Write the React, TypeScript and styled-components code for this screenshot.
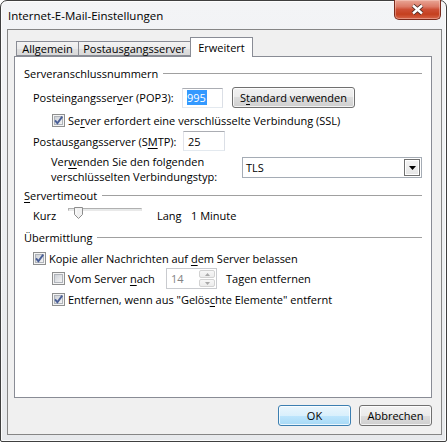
import React from 'react';
import styled, { createGlobalStyle } from 'styled-components';

const FONT = `'Segoe UI', 'Open Sans', 'Liberation Sans', sans-serif`;

const GlobalStyle = createGlobalStyle`
  html, body { margin: 0; padding: 0; background: #ffffff; }
  body { font-family: ${FONT}; }
`;

const Window = styled.div`
  box-sizing: border-box;
  width: 447px;
  height: 442px;
  border: 1px solid #3f3f3f;
  border-radius: 7px 7px 2px 2px;
  background: linear-gradient(180deg, #f3f4f6 0%, #eceef0 60%, #e7e9ec 100%);
  box-shadow: inset 0 0 0 1px rgba(255, 255, 255, 0.8);
  padding: 0 4px 6px 6px;
  display: flex;
  flex-direction: column;
  font-family: ${FONT};
  font-size: 11px;
  color: #000;
`;

const TitleBar = styled.div`
  height: 28px;
  display: flex;
  align-items: flex-start;
  justify-content: space-between;
`;

const Title = styled.div`
  margin: 7px 0 0 1px;
  line-height: 16px;
  font-size: 11.5px;
`;

const CloseButton = styled.div`
  box-sizing: border-box;
  width: 47px;
  height: 20px;
  margin: -1px 1px 0 0;
  border: 1px solid #7a2a1c;
  border-top: none;
  border-radius: 0 0 5px 5px;
  background: linear-gradient(
    180deg,
    #e9a797 0%,
    #dc7a66 35%,
    #cd4f35 50%,
    #c5401f 75%,
    #d6654a 100%
  );
  box-shadow: inset 0 0 0 1px rgba(255, 220, 210, 0.4);
  display: flex;
  align-items: center;
  justify-content: center;
`;

const Client = styled.div`
  box-sizing: border-box;
  height: 406px;
  border: 1px solid #858585;
  background: #f0f0f0;
  padding: 7px 9px 8px 6px;
  display: flex;
  flex-direction: column;
`;

const TabStrip = styled.div`
  height: 19px;
  display: flex;
  align-items: flex-end;
  padding-left: 3px;
  position: relative;
  z-index: 1;
`;

const Tab = styled.div<{ $active?: boolean; $w: number }>`
  box-sizing: border-box;
  width: ${(p) => p.$w}px;
  height: ${(p) => (p.$active ? 20 : 15)}px;
  margin-left: -1px;
  margin-bottom: ${(p) => (p.$active ? -1 : 0)}px;
  border: 1px solid #898c95;
  border-bottom: ${(p) => (p.$active ? 'none' : '1px solid #898c95')};
  background: ${(p) =>
    p.$active
      ? '#ffffff'
      : 'linear-gradient(180deg, #f3f3f3 0%, #ebebeb 50%, #e0e0e0 50%, #d9d9d9 100%)'};
  line-height: 13px;
  padding-top: ${(p) => (p.$active ? 3 : 0)}px;
  text-align: center;
  white-space: nowrap;
`;

const Panel = styled.div`
  box-sizing: border-box;
  height: 342px;
  border: 1px solid #898c95;
  background: #ffffff;
  padding: 0 9px;
  display: flex;
  flex-direction: column;
`;

const GroupHeader = styled.div<{ $mt: number }>`
  height: 16px;
  margin-top: ${(p) => p.$mt}px;
  display: flex;
  align-items: center;
  white-space: nowrap;
  &::after {
    content: '';
    flex: 1;
    margin-left: 5px;
    margin-top: 1px;
    border-top: 1px solid #a0a0a0;
  }
`;

const Row = styled.div<{ $mt: number; $h: number; $indent: number }>`
  height: ${(p) => p.$h}px;
  margin-top: ${(p) => p.$mt}px;
  padding-left: ${(p) => p.$indent}px;
  display: flex;
  align-items: center;
  white-space: nowrap;
`;

const Label = styled.span<{ $w?: number }>`
  flex: none;
  width: ${(p) => (p.$w ? `${p.$w}px` : 'auto')};
`;

const TwoLineLabel = styled.span<{ $w: number }>`
  flex: none;
  width: ${(p) => p.$w}px;
  display: flex;
  flex-direction: column;
  line-height: 15px;
`;

const LabelLine = styled.span`
  display: block;
  height: 15px;
`;

const U = styled.span`
  text-decoration: underline;
  text-underline-offset: 2px;
`;

const TextBox = styled.div<{ $w: number; $h: number }>`
  box-sizing: border-box;
  flex: none;
  width: ${(p) => p.$w}px;
  height: ${(p) => p.$h}px;
  border: 1px solid;
  border-color: #abadb3 #dbdfe6 #e3e9ef #e2e3ea;
  background: #ffffff;
  padding-left: 4px;
  display: flex;
  align-items: center;
`;

const Selected = styled.span`
  background: #3399ff;
  color: #ffffff;
  line-height: 15px;
  padding: 0 1px 0 0;
`;

const PushButton = styled.div<{ $w: number; $default?: boolean; $ml?: number }>`
  box-sizing: border-box;
  flex: none;
  width: ${(p) => p.$w}px;
  height: 21px;
  margin-left: ${(p) => p.$ml ?? 0}px;
  border: 1px solid ${(p) => (p.$default ? '#3c7fb1' : '#707070')};
  border-radius: 3px;
  background: ${(p) =>
    p.$default
      ? 'linear-gradient(180deg, #eaf6fd 0%, #d9f0fc 50%, #bee6fd 50%, #a7d9f5 100%)'
      : 'linear-gradient(180deg, #f2f2f2 0%, #ebebeb 50%, #dddddd 50%, #cfcfcf 100%)'};
  box-shadow: inset 0 0 0 1px rgba(255, 255, 255, 0.75);
  display: flex;
  align-items: center;
  justify-content: center;
`;

const CheckBoxBox = styled.span`
  flex: none;
  width: 13px;
  height: 13px;
  margin-right: 3px;
  display: inline-flex;
`;

const CheckBox = ({ checked }: { checked?: boolean }) => (
  <CheckBoxBox>
    <svg width="13" height="13" viewBox="0 0 13 13">
      <defs>
        <linearGradient id="cbfill" x1="0" y1="0" x2="1" y2="1">
          <stop offset="0" stopColor="#cbcfd5" />
          <stop offset="1" stopColor="#f6f6f6" />
        </linearGradient>
      </defs>
      <rect x="0.5" y="0.5" width="12" height="12" fill="#f4f4f4" stroke="#8e8f8f" />
      <rect x="2.5" y="2.5" width="8" height="8" fill="url(#cbfill)" stroke="#b0b4ba" />
      {checked && (
        <path
          d="M3 6.3 L5.4 9.2 L10.2 2.6"
          fill="none"
          stroke="#4a5f97"
          strokeWidth="1.9"
          strokeLinejoin="miter"
        />
      )}
    </svg>
  </CheckBoxBox>
);

const Combo = styled.div<{ $w: number }>`
  box-sizing: border-box;
  flex: none;
  width: ${(p) => p.$w}px;
  height: 21px;
  margin-top: -3px;
  border: 1px solid #a5acb5;
  background: #ffffff;
  padding: 0 1px 0 3px;
  display: flex;
  align-items: center;
  justify-content: space-between;
`;

const ComboArrow = styled.span`
  box-sizing: border-box;
  width: 16px;
  height: 17px;
  border: 1px solid #707070;
  background: linear-gradient(180deg, #f4f4f4 0%, #e6e6e6 100%);
  box-shadow: inset 0 0 0 1px #ffffff;
  display: flex;
  align-items: center;
  justify-content: center;
`;

const SliderTrack = styled.span`
  position: relative;
  flex: none;
  width: 74px;
  height: 16px;
  margin-right: 15px;
  &::before {
    content: '';
    position: absolute;
    left: 0;
    right: 0;
    top: 1px;
    height: 3px;
    box-sizing: border-box;
    border: 1px solid;
    border-color: #b0b0b0 #e3e3e3 #e9e9e9 #b0b0b0;
    background: #e7eaea;
  }
`;

const SliderThumb = styled.svg`
  position: absolute;
  left: 6px;
  top: 0;
`;

const Spin = styled.div`
  box-sizing: border-box;
  flex: none;
  width: 51px;
  height: 21px;
  border: 1px solid #c9cbcf;
  background: #ffffff;
  padding: 1px 1px 1px 4px;
  display: flex;
  align-items: center;
  justify-content: space-between;
  color: #838383;
  margin-right: 9px;
`;

const SpinButtons = styled.span`
  width: 16px;
  height: 17px;
  display: flex;
  flex-direction: column;
  gap: 1px;
`;

const SpinHalf = styled.span`
  box-sizing: border-box;
  flex: 1;
  border: 1px solid #d2d2d2;
  border-radius: 2px;
  background: linear-gradient(180deg, #f7f7f7 0%, #ececec 100%);
  display: flex;
  align-items: center;
  justify-content: center;
`;

const ButtonBar = styled.div`
  height: 21px;
  margin-top: 7px;
  display: flex;
  justify-content: flex-end;
  gap: 8px;
`;

export default function App() {
  return (
    <>
      <GlobalStyle />
      <Window>
        <TitleBar>
          <Title>Internet-E-Mail-Einstellungen</Title>
          <CloseButton>
            <svg width="13" height="11" viewBox="0 0 13 11">
              <path d="M2 1.5 L11 9.5 M11 1.5 L2 9.5" stroke="#4a2a24" strokeWidth="4.2" />
              <path d="M2 1.5 L11 9.5 M11 1.5 L2 9.5" stroke="#ffffff" strokeWidth="2.4" />
            </svg>
          </CloseButton>
        </TitleBar>
        <Client>
          <TabStrip>
            <Tab $w={63}>Allgemein</Tab>
            <Tab $w={113}>Postausgangsserver</Tab>
            <Tab $w={63} $active>
              Erweitert
            </Tab>
          </TabStrip>
          <Panel>
            <GroupHeader $mt={8}>Serveranschlussnummern</GroupHeader>
            <Row $mt={6} $h={21} $indent={9}>
              <Label $w={149}>
                Posteingangsser<U>v</U>er (POP3):
              </Label>
              <TextBox $w={41} $h={20}>
                <Selected>995</Selected>
              </TextBox>
              <PushButton $w={123} $ml={9}>
                S<U>t</U>andard verwenden
              </PushButton>
            </Row>
            <Row $mt={5} $h={14} $indent={28}>
              <CheckBox checked />
              <Label>
                Se<U>r</U>ver erfordert eine verschlüsselte Verbindung (SSL)
              </Label>
            </Row>
            <Row $mt={4} $h={20} $indent={9}>
              <Label $w={150}>
                Postausgangsserver (S<U>M</U>TP):
              </Label>
              <TextBox $w={42} $h={20}>
                25
              </TextBox>
            </Row>
            <Row $mt={3} $h={30} $indent={27}>
              <TwoLineLabel $w={191}>
                <LabelLine>
                  Ver<U>w</U>enden Sie den folgenden
                </LabelLine>
                <LabelLine>verschlüsselten Verbindungstyp:</LabelLine>
              </TwoLineLabel>
              <Combo $w={180}>
                TLS
                <ComboArrow>
                  <svg width="7" height="4" viewBox="0 0 7 4">
                    <path d="M0 0 H7 L3.5 4 Z" fill="#000" />
                  </svg>
                </ComboArrow>
              </Combo>
            </Row>
            <GroupHeader $mt={3}>
              <U>S</U>ervertimeout
            </GroupHeader>
            <Row $mt={4} $h={16} $indent={9}>
              <Label $w={35}>Kurz</Label>
              <SliderTrack>
                <SliderThumb width="9" height="12" viewBox="0 0 9 12">
                  <path
                    d="M0.5 0.5 H8.5 V7.5 L4.5 11.5 L0.5 7.5 Z"
                    fill="#f1f1f1"
                    stroke="#8d8d8d"
                  />
                  <path d="M2 2 V7" stroke="#ffffff" />
                </SliderThumb>
              </SliderTrack>
              <Label $w={34}>Lang</Label>
              <Label>1 Minute</Label>
            </Row>
            <GroupHeader $mt={6}>Übermittlung</GroupHeader>
            <Row $mt={6} $h={14} $indent={9}>
              <CheckBox checked />
              <Label>
                Kopie aller Nachrichten auf <U>d</U>em Server belassen
              </Label>
            </Row>
            <Row $mt={3} $h={21} $indent={28}>
              <CheckBox />
              <Label $w={98}>
                Vom Server <U>n</U>ach
              </Label>
              <Spin>
                14
                <SpinButtons>
                  <SpinHalf>
                    <svg width="5" height="3" viewBox="0 0 5 3">
                      <path d="M0 3 L2.5 0 L5 3 Z" fill="#a8a8a8" />
                    </svg>
                  </SpinHalf>
                  <SpinHalf>
                    <svg width="5" height="3" viewBox="0 0 5 3">
                      <path d="M0 0 H5 L2.5 3 Z" fill="#a8a8a8" />
                    </svg>
                  </SpinHalf>
                </SpinButtons>
              </Spin>
              <Label>Tagen entfernen</Label>
            </Row>
            <Row $mt={3} $h={14} $indent={28}>
              <CheckBox checked />
              <Label>
                Entfernen, wenn aus "Gelös<U>c</U>hte Elemente" entfernt
              </Label>
            </Row>
          </Panel>
          <ButtonBar>
            <PushButton $w={73} $default>
              OK
            </PushButton>
            <PushButton $w={73}>Abbrechen</PushButton>
          </ButtonBar>
        </Client>
      </Window>
    </>
  );
}
